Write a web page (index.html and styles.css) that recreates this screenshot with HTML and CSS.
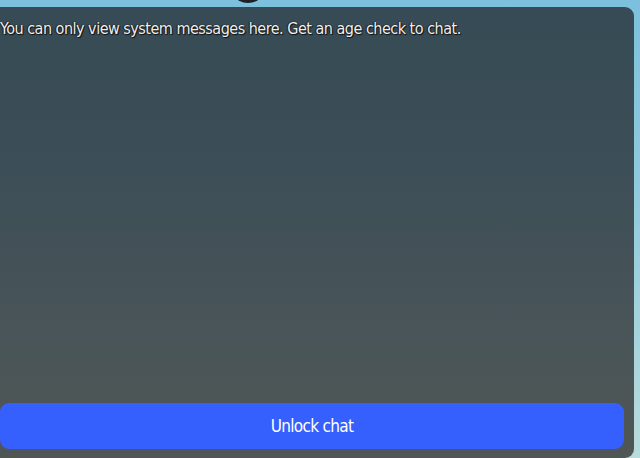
FILE: index.html
```html
<!DOCTYPE html>
<html>
<head>
<meta charset="utf-8">
<link rel="stylesheet" href="styles.css">
</head>
<body>
<div class="scene">
  <div class="blob"></div>
  <div class="panel">
    <p class="notice">You can only view system messages here. Get an age check to chat.</p>
    <button class="unlock">Unlock chat</button>
  </div>
</div>
</body>
</html>
```
FILE: styles.css
```css
html, body {
  margin: 0;
  padding: 0;
  width: 640px;
  height: 458px;
  overflow: hidden;
}
.scene {
  position: relative;
  width: 640px;
  height: 458px;
  background: linear-gradient(180deg, #7cc0dd 0%, #8fc9dc 40%, #b9dcdc 100%);
  padding: 7px 6px 0 0;
  box-sizing: border-box;
}
.blob {
  position: absolute;
  left: 236px;
  top: -10px;
  width: 24px;
  height: 13px;
  border-radius: 50%;
  background: #1d2024;
}
.panel {
  height: 451px;
  border-radius: 0 9px 9px 0;
  background: linear-gradient(180deg, #364b55 0%, #3c4e57 35%, #4a5558 75%, #505555 100%);
  display: flex;
  flex-direction: column;
  justify-content: space-between;
  padding: 0 10px 9px 0;
  box-sizing: border-box;
}
.notice {
  margin: 0;
  padding-top: 11px;
  font-family: "DejaVu Sans Condensed", "DejaVu Sans", sans-serif;
  font-size: 16px;
  line-height: 22px;
  color: #efefef;
  text-shadow: 0 0 1px #111, 1px 1px 1px #111, -1px 0 1px #222;
  letter-spacing: -0.5px;
}
.unlock {
  height: 46px;
  border: none;
  border-radius: 9px;
  background: #3560fd;
  color: #ffffff;
  font-family: "DejaVu Sans Condensed", "DejaVu Sans", sans-serif;
  font-size: 17px;
  letter-spacing: -0.7px;
  padding: 0;
  cursor: pointer;
}
```
